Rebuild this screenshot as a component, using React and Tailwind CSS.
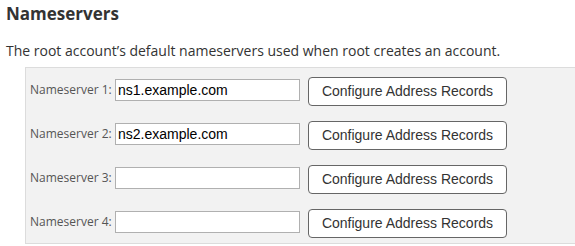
import React from "react";

const rows = [
  { n: 1, v: "ns1.example.com" },
  { n: 2, v: "ns2.example.com" },
  { n: 3, v: "" },
  { n: 4, v: "" },
];

export default function App() {
  return (
    <div className="w-[575px] h-[246px] overflow-hidden bg-white text-[#333] font-['Open_Sans',sans-serif]">
      <h2 className="pl-[6px] pt-[3px] text-[17px] leading-[22px] font-bold text-[#333]">Nameservers</h2>
      <p className="pl-[6px] mt-[16px] text-[14px] leading-[20px] text-[#333]">
        The root account’s default nameservers used when root creates an account.
      </p>
      <div className="ml-[25px] mt-[6px] w-[560px] border border-[#dcdcdc] bg-[#f2f2f2] pl-[4px] pt-[9px] pb-[5px] flex flex-col gap-[15px]">
        {rows.map((r) => (
          <div key={r.n} className="flex items-start h-[29px]">
            <label className="shrink-0 w-[85px] mt-[4px] text-[12px] leading-[18px] text-[#555] whitespace-nowrap">
              Nameserver {r.n}:
            </label>
            <input
              readOnly
              value={r.v}
              className="mt-[2px] shrink-0 w-[185px] h-[22px] border border-[#b0b0b0] bg-white px-[2px] text-[14px] font-['Liberation_Sans',Arial,sans-serif] text-black outline-none"
            />
            <button className="ml-[8px] shrink-0 w-[199px] h-[29px] rounded-[4px] border border-[#666] bg-white text-[14px] font-['Liberation_Sans',Arial,sans-serif] text-[#333]">
              Configure Address Records
            </button>
          </div>
        ))}
      </div>
    </div>
  );
}
